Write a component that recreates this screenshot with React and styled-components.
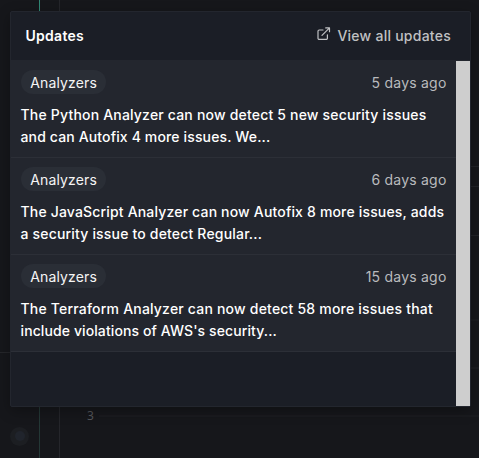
import React from "react";
import styled, { createGlobalStyle } from "styled-components";

const GlobalStyle = createGlobalStyle`
  * { box-sizing: border-box; }
  html, body { margin: 0; background: #16171b; }
  body { font-family: Inter, "Liberation Sans", sans-serif; }
`;

const Page = styled.main`
  position: relative;
  width: 479px;
  height: 458px;
  overflow: hidden;
  padding: 11px 8px 0 10px;
  background: #16171b;
`;

const Backdrop = styled.svg`
  position: absolute;
  inset: 0;
`;

const ChartLabel = styled.span`
  position: absolute;
  left: 87px;
  top: 409px;
  font: 12px/14px "Noto Sans", sans-serif;
  color: #55565a;
`;

const Panel = styled.section`
  position: relative;
  display: flex;
  flex-direction: column;
  width: 461px;
  height: 396px;
  border: 1px solid #23262e;
  border-radius: 2px;
  background: #1b1e26;
  box-shadow: 0 4px 14px rgba(0, 0, 0, 0.3);
`;

const Header = styled.header`
  display: flex;
  align-items: center;
  justify-content: space-between;
  height: 49px;
  flex: none;
  padding: 0 19px 0 14.5px;
  border-bottom: 1px solid #23262e;
`;

const Heading = styled.h1`
  margin: 0;
  font-size: 14px;
  line-height: 20px;
  font-weight: 600;
  letter-spacing: 0.28px;
  color: #fff;
`;

const AllLink = styled.a`
  display: flex;
  align-items: center;
  gap: 6.5px;
  font-size: 14px;
  line-height: 20px;
  font-weight: 500;
  letter-spacing: 0.25px;
  color: #c0c1c3;
`;

const LinkIcon = styled.svg`
  margin-top: -4px;
`;

const Body = styled.div`
  display: flex;
  flex: 1;
  min-height: 0;
`;

const List = styled.div`
  flex: 1;
  min-width: 0;
`;

const Scrollbar = styled.div`
  flex: none;
  width: 14px;
  background: #cecece;
`;

const Item = styled.article`
  height: 97px;
  padding: 9px 9.5px 0 10px;
  background: #23262e;
  border-bottom: 1px solid #2c2f37;
`;

const Meta = styled.div`
  display: flex;
  align-items: center;
  justify-content: space-between;
  height: 24px;
`;

const Tag = styled.span`
  width: 85px;
  height: 24px;
  padding: 1px 0 0 9.2px;
  border-radius: 12px;
  background: #2a2e36;
  font-size: 14px;
  line-height: 24px;
  letter-spacing: 0.16px;
  color: #f5f5f5;
`;

const Age = styled.time`
  padding-top: 1px;
  font-size: 14px;
  line-height: 24px;
  letter-spacing: 0.22px;
  color: #b9babd;
`;

const Title = styled.p`
  margin: 10px 0 0 -0.5px;
  font-size: 14px;
  line-height: 22px;
  font-weight: 500;
  white-space: nowrap;
  color: #fff;
`;

const TitleLine = styled.span`
  display: block;
  letter-spacing: ${({ $tracking }) => $tracking}px;
`;

const updates = [
  {
    age: "5 days ago",
    lines: [
      { text: "The Python Analyzer can now detect 5 new security issues", tracking: 0.19 },
      { text: "and can Autofix 4 more issues. We...", tracking: 0.14 },
    ],
  },
  {
    age: "6 days ago",
    lines: [
      { text: "The JavaScript Analyzer can now Autofix 8 more issues, adds", tracking: 0.17 },
      { text: "a security issue to detect Regular...", tracking: 0.18 },
    ],
  },
  {
    age: "15 days ago",
    lines: [
      { text: "The Terraform Analyzer can now detect 58 more issues that", tracking: 0.2 },
      { text: "include violations of AWS's security...", tracking: 0.1 },
    ],
  },
];

export default function App() {
  return (
    <Page>
      <GlobalStyle />
      <Backdrop width="479" height="458" shapeRendering="crispEdges">
        <rect x="39" width="1" height="12" fill="#318875" />
        <rect x="39" y="407" width="1" height="51" fill="#243836" />
        <rect x="59" width="1" height="458" fill="#25262b" />
        <rect y="352" width="10" height="1" fill="#25262a" />
        <rect x="471" y="166" width="8" height="1" fill="#222328" />
        <rect x="471" y="186" width="8" height="1" fill="#222328" />
        <rect x="471" y="235" width="8" height="1" fill="#222328" />
        <rect x="471" y="319" width="8" height="2" fill="#1a1b1f" />
        <rect x="471" y="367" width="8" height="2" fill="#1b1c20" />
        <rect x="99" y="415" width="380" height="2" fill="#1a1b1f" />
        <g shapeRendering="auto">
          <circle cx="19.5" cy="436.5" r="9.5" fill="#1c1e22" />
          <circle cx="20" cy="436" r="5" fill="#20242c" />
        </g>
      </Backdrop>
      <ChartLabel>3</ChartLabel>
      <Panel>
        <Header>
          <Heading>Updates</Heading>
          <AllLink>
            <LinkIcon width="14" height="14" viewBox="0 0 14 14" fill="none" stroke="currentColor" strokeWidth="1.2" strokeLinecap="round" strokeLinejoin="round">
              <path d="M6 3H2.2A1.2 1.2 0 0 0 1 4.2v7A1.2 1.2 0 0 0 2.2 12.4h7a1.2 1.2 0 0 0 1.2-1.2V7.8M8.7.9h3.8v3.8M12.5.9 5 8.4" />
            </LinkIcon>
            View all updates
          </AllLink>
        </Header>
        <Body>
          <List>
            {updates.map((update) => (
              <Item key={update.age}>
                <Meta>
                  <Tag>Analyzers</Tag>
                  <Age>{update.age}</Age>
                </Meta>
                <Title>
                  {update.lines.map((line) => (
                    <TitleLine key={line.text} $tracking={line.tracking}>
                      {line.text}
                    </TitleLine>
                  ))}
                </Title>
              </Item>
            ))}
          </List>
          <Scrollbar />
        </Body>
      </Panel>
    </Page>
  );
}
